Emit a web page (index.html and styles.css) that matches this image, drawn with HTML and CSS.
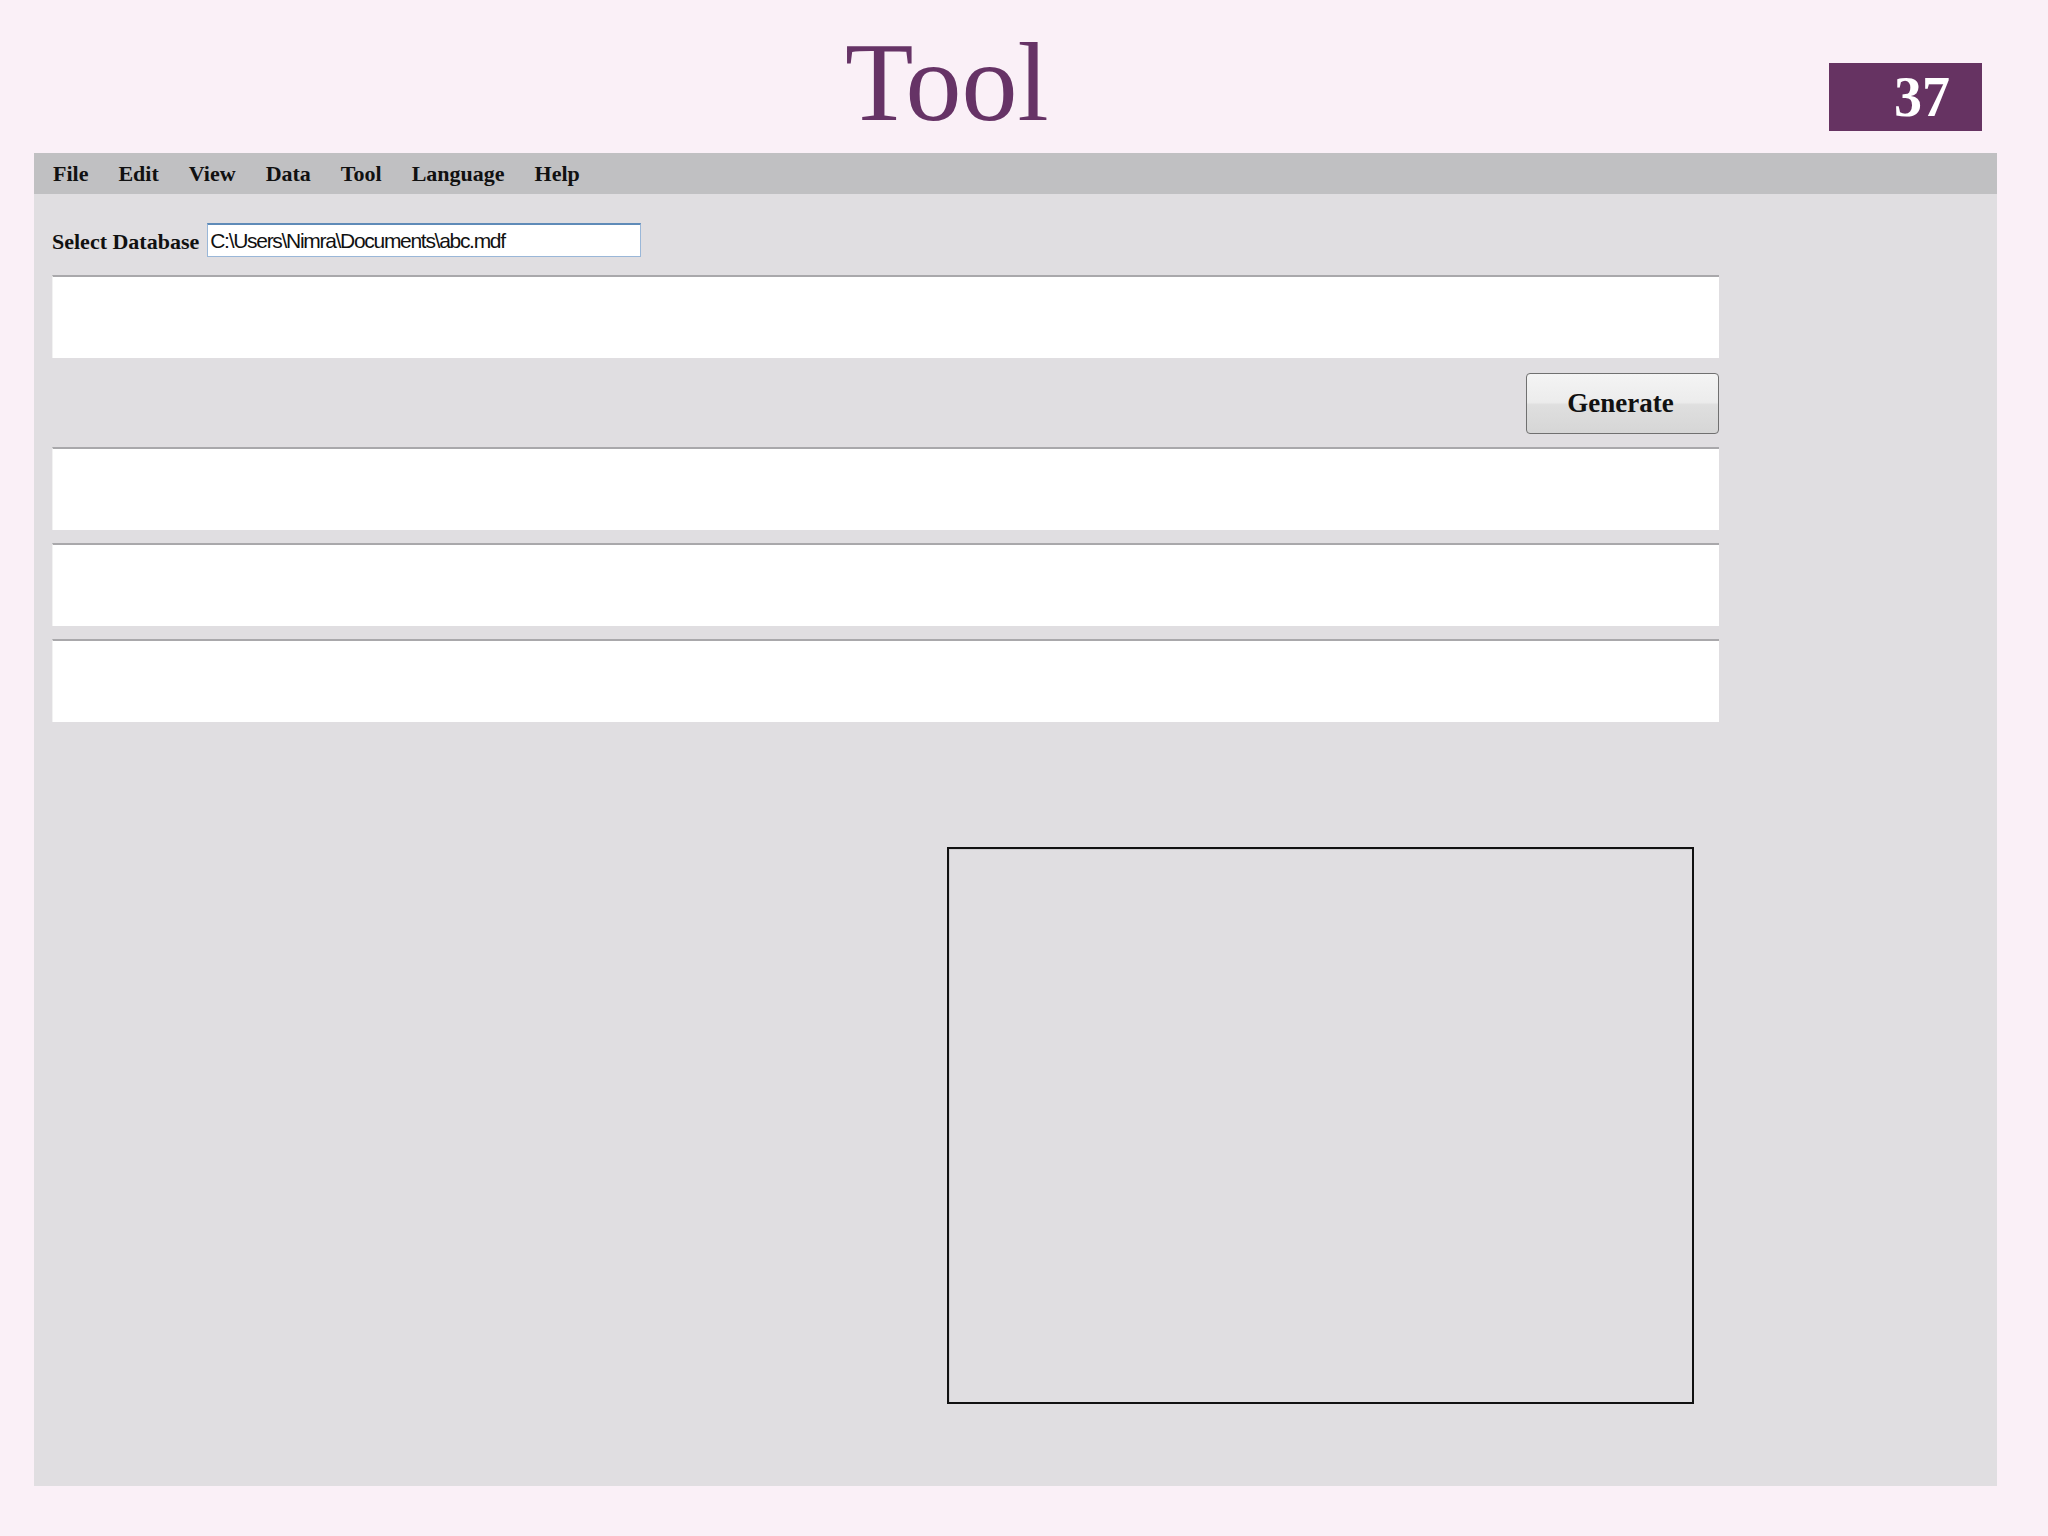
FILE: index.html
```html
<!DOCTYPE html>
<html lang="en">
<head>
<meta charset="utf-8">
<title>Tool</title>
<link rel="stylesheet" href="styles.css">
</head>
<body>
<div class="slide">
  <header class="header">
    <h1 class="title">Tool</h1>
    <div class="badge">37</div>
  </header>
  <div class="window">
    <nav class="menubar">
      <span class="menu-item">File</span>
      <span class="menu-item">Edit</span>
      <span class="menu-item">View</span>
      <span class="menu-item">Data</span>
      <span class="menu-item">Tool</span>
      <span class="menu-item">Language</span>
      <span class="menu-item">Help</span>
    </nav>
    <main class="panel">
      <div class="select-row">
        <label class="select-label">Select Database</label>
        <div class="path-input"><span class="path-text">C:\Users\Nimra\Documents\abc.mdf</span></div>
      </div>
      <div class="field field-first"></div>
      <div class="button-row">
        <button class="generate-btn">Generate</button>
      </div>
      <div class="field"></div>
      <div class="field field-gap"></div>
      <div class="field field-gap"></div>
      <div class="canvas-box"></div>
    </main>
  </div>
</div>
</body>
</html>
```
FILE: styles.css
```css
html, body {
  margin: 0;
  padding: 0;
}
body {
  background: #faf0f7;
  font-family: "Liberation Serif", "Times New Roman", serif;
  width: 2048px;
  height: 1536px;
  overflow: hidden;
}
.slide {
  padding: 0 51px 0 34px;
}
.header {
  height: 153px;
  display: flex;
  align-items: flex-start;
}
.title {
  margin: 26px 0 0 811px;
  font-family: "Liberation Serif", "Times New Roman", serif;
  font-weight: normal;
  font-size: 112px;
  line-height: 1;
  color: #663366;
}
.badge {
  margin: 63px 15px 0 auto;
  width: 153px;
  height: 68px;
  box-sizing: border-box;
  padding-right: 32px;
  background: #663362;
  color: #ffffff;
  font-weight: bold;
  font-size: 56px;
  line-height: 68px;
  text-align: right;
}
.window {
  background: #e0dee1;
}
.menubar {
  height: 41px;
  background: #c0c0c2;
  display: flex;
  align-items: center;
  gap: 30px;
  padding-left: 19px;
}
.menu-item {
  font-weight: bold;
  font-size: 22px;
  line-height: 41px;
  color: #111111;
}
.panel {
  display: flex;
  flex-direction: column;
  padding: 29px 0 82px 18px;
  width: 1667px;
}
.select-row {
  display: flex;
  align-items: center;
  gap: 8px;
  height: 34px;
}
.select-label {
  font-weight: bold;
  font-size: 22px;
  color: #111111;
  padding-top: 4px;
}
.path-input {
  width: 434px;
  height: 34px;
  box-sizing: border-box;
  background: #ffffff;
  border: 1px solid #9ab7d8;
  border-top: 2px solid #5f8bb8;
  display: flex;
  align-items: center;
  padding-left: 2px;
}
.path-text {
  font-family: "Liberation Sans", Arial, sans-serif;
  font-size: 21px;
  letter-spacing: -1.3px;
  color: #111111;
}
.field {
  height: 83px;
  box-sizing: border-box;
  background: #ffffff;
  border-top: 2px solid #a9a8ab;
  border-left: 1px solid #f2f2f2;
}
.field-first {
  margin-top: 18px;
}
.field-gap {
  margin-top: 13px;
}
.button-row {
  display: flex;
  justify-content: flex-end;
  margin: 15px 0 13px;
}
.generate-btn {
  width: 193px;
  height: 61px;
  border: 1px solid #707070;
  border-radius: 4px;
  background: linear-gradient(#f4f4f4 0%, #ececec 48%, #dfdfdf 52%, #d6d6d6 100%);
  font-family: "Liberation Serif", "Times New Roman", serif;
  font-weight: bold;
  font-size: 27px;
  color: #111111;
  padding: 0 4px 0 0;
}
.canvas-box {
  margin: 125px 0 0 895px;
  width: 747px;
  height: 557px;
  box-sizing: border-box;
  border: 2px solid #111111;
  box-shadow: inset 1px 1px 0 #cfcdd0;
}
```
